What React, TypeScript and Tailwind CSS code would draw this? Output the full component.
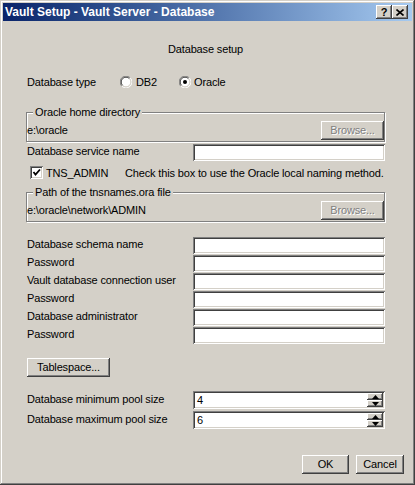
import React from 'react';

const raised =
  'shadow-[inset_-1px_-1px_0_#404040,inset_1px_1px_0_#ffffff,inset_-2px_-2px_0_#808080,inset_2px_2px_0_#d4d0c8]';
const sunken =
  'shadow-[inset_1px_1px_0_#808080,inset_-1px_-1px_0_#ffffff,inset_2px_2px_0_#404040,inset_-2px_-2px_0_#d4d0c8]';

function Radio({ checked }: { checked?: boolean }) {
  return (
    <svg width="12" height="12" viewBox="0 0 12 12" className="shrink-0">
      <circle cx="6" cy="6" r="5" fill="#fff" />
      <path d="M1.8 10.2 A5.5 5.5 0 0 1 10.2 1.8" fill="none" stroke="#808080" strokeWidth="1" />
      <path d="M10.2 1.8 A5.5 5.5 0 0 1 1.8 10.2" fill="none" stroke="#ffffff" strokeWidth="1" />
      <path d="M2.6 9.4 A4.5 4.5 0 0 1 9.4 2.6" fill="none" stroke="#404040" strokeWidth="1" />
      <path d="M9.4 2.6 A4.5 4.5 0 0 1 2.6 9.4" fill="none" stroke="#d4d0c8" strokeWidth="1" />
      {checked && <circle cx="6" cy="6" r="2" fill="#000" />}
    </svg>
  );
}

function Button({ label, disabled, className }: { label: string; disabled?: boolean; className: string }) {
  return (
    <div className={`${raised} ${className} flex items-center justify-center bg-[#d4d0c8]`}>
      {disabled ? (
        <span className="text-[#808080] [text-shadow:1px_1px_0_#ffffff]">{label}</span>
      ) : (
        <span>{label}</span>
      )}
    </div>
  );
}

function Group({ legend, value }: { legend: string; value: string }) {
  return (
    <div className="relative h-[30px] border border-[#808080] shadow-[inset_1px_1px_0_#ffffff,1px_1px_0_#ffffff] flex items-end justify-between">
      <span className="absolute -top-[8px] left-[6px] px-[2px] bg-[#d4d0c8] leading-[14px]">{legend}</span>
      <span className="leading-[14px] mb-[4px]">{value}</span>
      <Button label="Browse..." disabled className="w-[63px] h-[19px] mb-[1px]" />
    </div>
  );
}

function Field({ label, value, spin }: { label: string; value?: string; spin?: boolean }) {
  return (
    <div className={`flex items-center ${spin ? 'h-[18px]' : 'h-[17px]'}`}>
      <span className="pl-[1px] leading-[14px] mb-[3px]">{label}</span>
      <div className={`${sunken} ml-auto w-[192px] h-full bg-white p-[2px] flex items-center`}>
        <span className="pl-[2px] leading-[13px] grow">{value}</span>
        {spin && (
          <div className="w-[16px] h-full flex flex-col">
            <div className={`${raised} bg-[#d4d0c8] flex-1 flex items-center justify-center`}>
              <svg width="7" height="4" viewBox="0 0 7 4">
                <polygon points="3.5,0 7,4 0,4" fill="#000" />
              </svg>
            </div>
            <div className={`${raised} bg-[#d4d0c8] flex-1 flex items-center justify-center`}>
              <svg width="7" height="4" viewBox="0 0 7 4">
                <polygon points="0,0 7,0 3.5,4" fill="#000" />
              </svg>
            </div>
          </div>
        )}
      </div>
    </div>
  );
}

export default function App() {
  return (
    <div className="w-[415px] h-[485px] bg-[#d4d0c8] p-[3px] flex flex-col text-[11px] tracking-[-0.15px] text-black font-['Liberation_Sans',Arial,sans-serif] shadow-[inset_-1px_-1px_0_#404040,inset_1px_1px_0_#d4d0c8,inset_-2px_-2px_0_#808080,inset_2px_2px_0_#ffffff]">
      {/* Title bar */}
      <div className="h-[18px] shrink-0 bg-linear-to-r from-[#0a246a] to-[#a6caf0] flex items-center pl-[2px] pr-[4px]">
        <span className="text-white font-bold leading-[14px] text-[12px] tracking-normal whitespace-nowrap">
          Vault Setup - Vault Server - Database
        </span>
        <div className="ml-auto flex">
          <div className={`${raised} w-[16px] h-[14px] bg-[#d4d0c8] flex items-center justify-center font-bold text-[11px] leading-none`}>?</div>
          <div className={`${raised} w-[16px] h-[14px] bg-[#d4d0c8] flex items-center justify-center`}>
            <svg width="8" height="7" viewBox="0 0 8 7">
              <path d="M0.5 0.5 L7.5 6.5 M7.5 0.5 L0.5 6.5" stroke="#000" strokeWidth="1.6" />
            </svg>
          </div>
        </div>
      </div>

      {/* Body */}
      <div className="flex flex-col pl-[23px] pr-[27px]">
        <div className="mt-[21px] h-[14px] leading-[14px] text-center">Database setup</div>

        <div className="mt-[19px] h-[14px] flex items-center">
          <span className="w-[94px] pl-[1px] leading-[14px] mb-[1px]">Database type</span>
          <Radio />
          <span className="w-[43px] ml-[4px] leading-[14px] mb-[1px]">DB2</span>
          <Radio checked />
          <span className="ml-[3px] leading-[14px] mb-[1px]">Oracle</span>
        </div>

        <div className="mt-[23px]">
          <Group legend="Oracle home directory" value="e:\oracle" />
        </div>

        <div className="mt-[2px]">
          <Field label="Database service name" />
        </div>

        <div className="mt-[5px] h-[13px] flex items-center whitespace-nowrap">
          <div className={`${sunken} ml-[4px] w-[13px] h-[13px] shrink-0 bg-white flex items-center justify-center`}>
            <svg width="9" height="9" viewBox="0 0 9 9">
              <path d="M1.5 4 L3.5 6.5 L8 1.5" fill="none" stroke="#000" strokeWidth="1.8" />
            </svg>
          </div>
          <span className="w-[79px] shrink-0 ml-[3px] leading-[14px]">TNS_ADMIN</span>
          <span className="leading-[14px]">Check this box to use the Oracle local naming method.</span>
        </div>

        <div className="mt-[13px]">
          <Group legend="Path of the tnsnames.ora file" value="e:\oracle\network\ADMIN" />
        </div>

        <div className="mt-[15px] flex flex-col gap-[1px]">
          <Field label="Database schema name" />
          <Field label="Password" />
          <Field label="Vault database connection user" />
          <Field label="Password" />
          <Field label="Database administrator" />
          <Field label="Password" />
        </div>

        <div className="mt-[14px] flex">
          <Button label="Tablespace..." className="ml-[1px] w-[83px] h-[19px]" />
        </div>

        <div className="mt-[14px] flex flex-col gap-[2px]">
          <Field label="Database minimum pool size" value="4" spin />
          <Field label="Database maximum pool size" value="6" spin />
        </div>
      </div>

      <div className="mt-[26px] pr-[8px] flex justify-end gap-[7px]">
        <Button label="OK" className="w-[47px] h-[19px]" />
        <Button label="Cancel" className="w-[48px] h-[19px]" />
      </div>
    </div>
  );
}
